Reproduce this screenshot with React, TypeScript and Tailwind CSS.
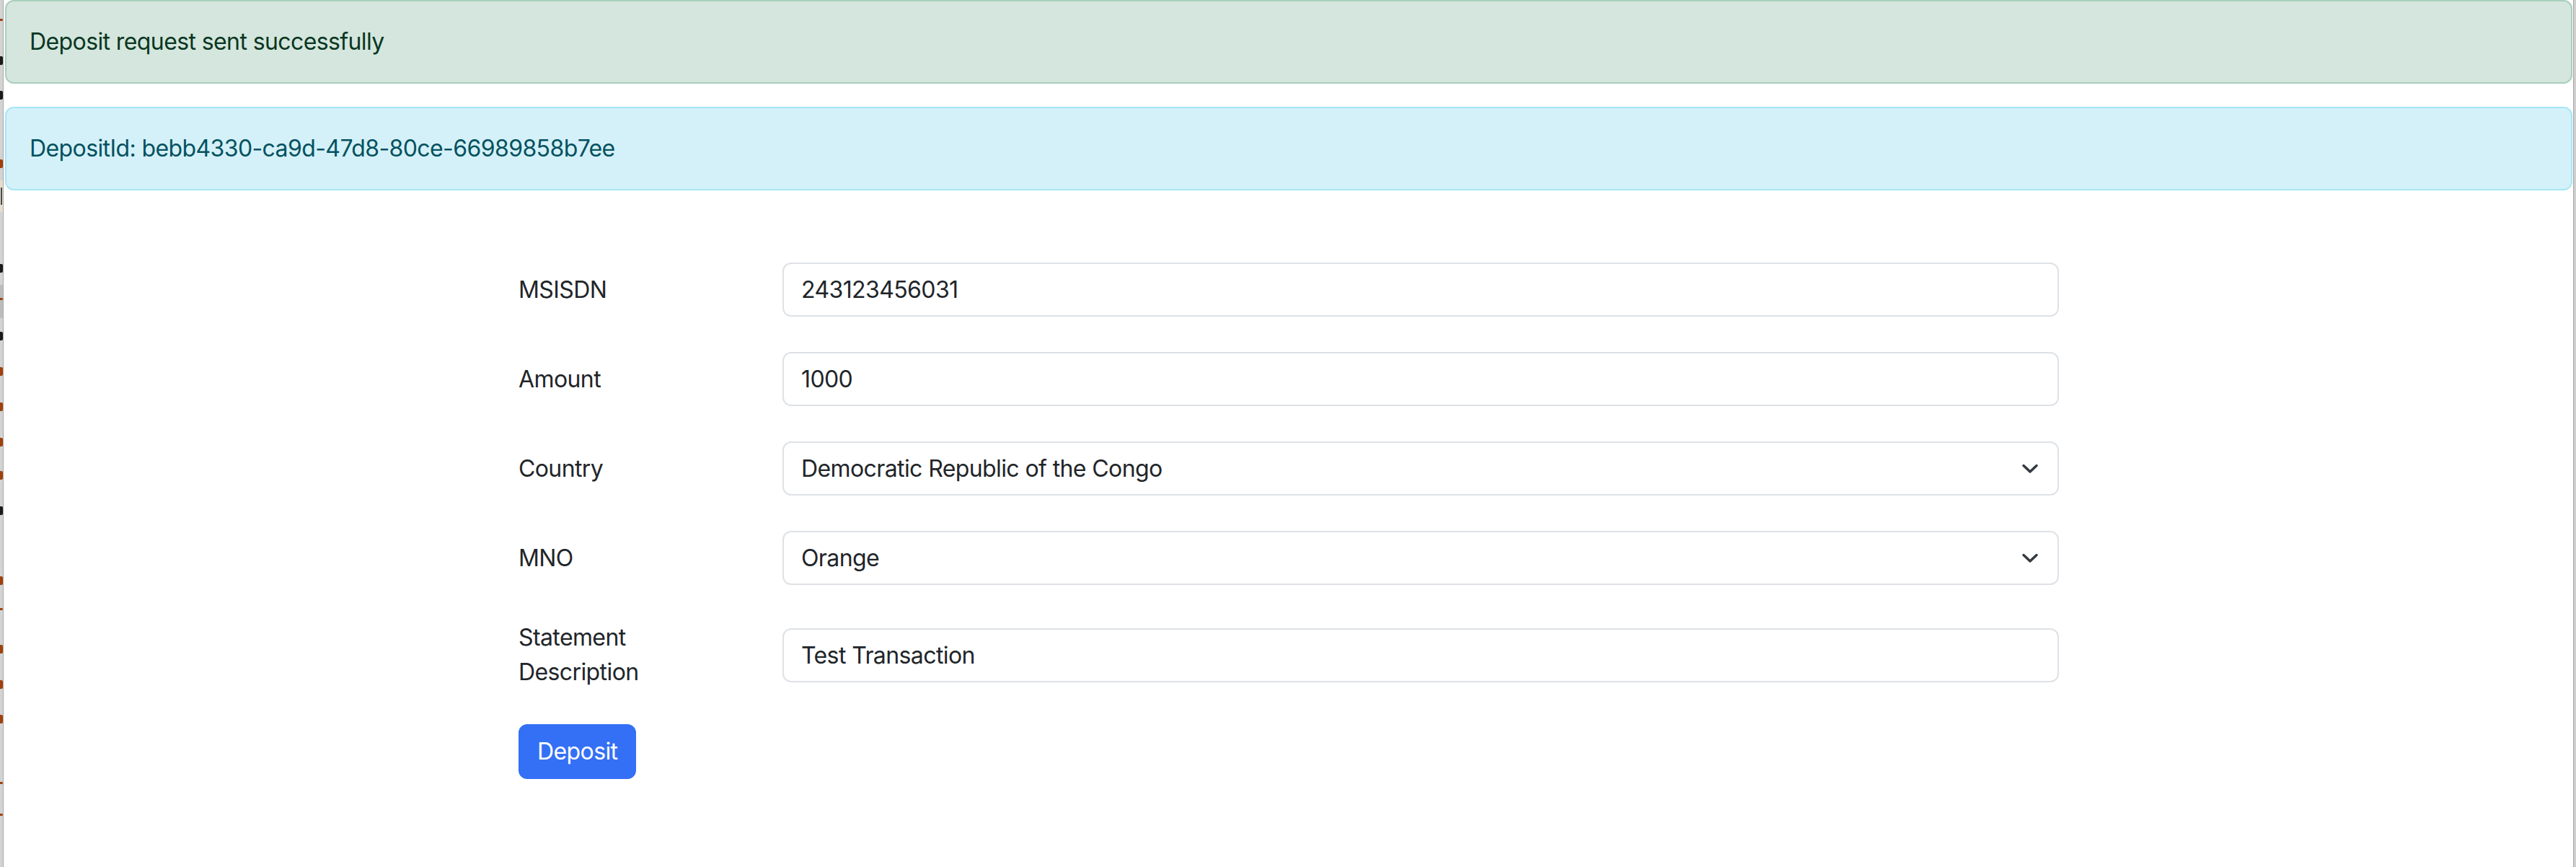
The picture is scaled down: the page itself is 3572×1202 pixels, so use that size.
import { useState } from 'react';

// slivers of the window behind, peeking out at the left edge
const behindMarks = [
  { top: 26, h: 3, tone: 'bg-[#a0410d]' },
  { top: 78, h: 12, tone: 'bg-[#1a1a1a]' },
  { top: 126, h: 12, tone: 'bg-[#1a1a1a]' },
  { top: 221, h: 12, tone: 'bg-[#a0410d]' },
  { top: 366, h: 12, tone: 'bg-[#1a1a1a]' },
  { top: 413, h: 3, tone: 'bg-[#a0410d]' },
  { top: 460, h: 12, tone: 'bg-[#1a1a1a]' },
  { top: 509, h: 12, tone: 'bg-[#a0410d]' },
  { top: 558, h: 12, tone: 'bg-[#a0410d]' },
  { top: 607, h: 12, tone: 'bg-[#a0410d]' },
  { top: 653, h: 12, tone: 'bg-[#a0410d]' },
  { top: 702, h: 12, tone: 'bg-[#1a1a1a]' },
  { top: 799, h: 12, tone: 'bg-[#a0410d]' },
  { top: 843, h: 3, tone: 'bg-[#a0410d]' },
  { top: 894, h: 12, tone: 'bg-[#a0410d]' },
  { top: 943, h: 12, tone: 'bg-[#a0410d]' },
  { top: 991, h: 12, tone: 'bg-[#a0410d]' },
  { top: 1084, h: 3, tone: 'bg-[#a0410d]' },
  { top: 1128, h: 3, tone: 'bg-[#a0410d]' },
];

const countries = [
  { value: 'COD', label: 'Democratic Republic of the Congo' },
  { value: 'ZMB', label: 'Zambia' },
  { value: 'UGA', label: 'Uganda' },
];

const operators = [
  { value: 'ORANGE', label: 'Orange' },
  { value: 'VODACOM', label: 'Vodacom' },
  { value: 'AIRTEL', label: 'Airtel' },
];

const inputClass =
  'h-[75px] w-full rounded-[12px] border-2 border-[#dee2e6] bg-white px-[24px] font-[Inter,sans-serif] text-[32px] leading-[48px] tracking-[-0.6px] text-[#212529] outline-none';

const EdgeStrip = () => (
  <div className="relative w-[5px] shrink-0 overflow-hidden border-r border-[#a9a9a9] bg-[#d3d3d3]">
    <div className="absolute left-0 top-[250px] h-[44px] w-full bg-[#e6dfcf]">
      <div className="ml-[1px] mt-[10px] h-[24px] w-[2px] bg-[#4a4a4a]" />
    </div>
    <div className="absolute left-0 top-[395px] h-[46px] w-full bg-[#bcbcbc]" />
    {behindMarks.map((mark) => (
      <div
        key={mark.top}
        className={`absolute left-0 w-[4px] rounded-r-[2px] ${mark.tone}`}
        style={{ top: mark.top, height: mark.h }}
      />
    ))}
  </div>
);

const Chevron = () => (
  <svg
    className="pointer-events-none absolute right-[28px] top-1/2 -translate-y-1/2"
    width="24"
    height="16"
    viewBox="0 0 24 16"
  >
    <path d="M3 3.5 12 12 21 3.5" fill="none" stroke="#343a40" strokeWidth="3.5" strokeLinecap="round" strokeLinejoin="round" />
  </svg>
);

const FormRow = ({ label, children }: { label: string; children: React.ReactNode }) => (
  <div className="mb-[49px] flex items-center">
    <label className="w-[366px] shrink-0">
      <span className="block max-w-[260px]">{label}</span>
    </label>
    <div className="relative flex-1">{children}</div>
  </div>
);

export default function App() {
  const [msisdn, setMsisdn] = useState('243123456031');
  const [amount, setAmount] = useState('1000');
  const [country, setCountry] = useState('COD');
  const [mno, setMno] = useState('ORANGE');
  const [statement, setStatement] = useState('Test Transaction');

  return (
    <div className="flex min-h-screen bg-white font-[Inter,sans-serif] text-[32px] leading-[48px] tracking-[-0.6px] text-[#212529]">
      <EdgeStrip />

      <main className="flex-1 pl-[2px] pr-[1px]">
        <div className="rounded-[12px] border-2 border-[#a8cfbd] bg-[#d4e6dd] p-[32px] text-[#0a3622]">
          Deposit request sent successfully
        </div>
        <div className="mt-[32px] rounded-[12px] border-2 border-[#a6e6f6] bg-[#d4f1f9] p-[32px] text-[#055160]">
          DepositId: bebb4330-ca9d-47d8-80ce-66989858b7ee
        </div>

        <form className="mx-auto mt-[100px] w-[2136px]" onSubmit={(event) => event.preventDefault()}>
          <FormRow label="MSISDN">
            <input className={inputClass} value={msisdn} onChange={(event) => setMsisdn(event.target.value)} />
          </FormRow>
          <FormRow label="Amount">
            <input className={inputClass} value={amount} onChange={(event) => setAmount(event.target.value)} />
          </FormRow>
          <FormRow label="Country">
            <select className={`${inputClass} appearance-none pr-[80px]`} value={country} onChange={(event) => setCountry(event.target.value)}>
              {countries.map((item) => (
                <option key={item.value} value={item.value}>
                  {item.label}
                </option>
              ))}
            </select>
            <Chevron />
          </FormRow>
          <FormRow label="MNO">
            <select className={`${inputClass} appearance-none pr-[80px]`} value={mno} onChange={(event) => setMno(event.target.value)}>
              {operators.map((item) => (
                <option key={item.value} value={item.value}>
                  {item.label}
                </option>
              ))}
            </select>
            <Chevron />
          </FormRow>
          <FormRow label="Statement Description">
            <input className={inputClass} value={statement} onChange={(event) => setStatement(event.target.value)} />
          </FormRow>

          <button
            type="submit"
            className="-mt-[1px] h-[76px] rounded-[12px] border-2 border-[#3470f5] bg-[#3470f5] px-[24px] text-[32px] leading-[48px] tracking-[-0.6px] text-white"
          >
            Deposit
          </button>
        </form>
      </main>

      <div className="w-[4px] shrink-0 border-l border-[#a9a9a9] bg-[#cfcfcf]" />
    </div>
  );
}
